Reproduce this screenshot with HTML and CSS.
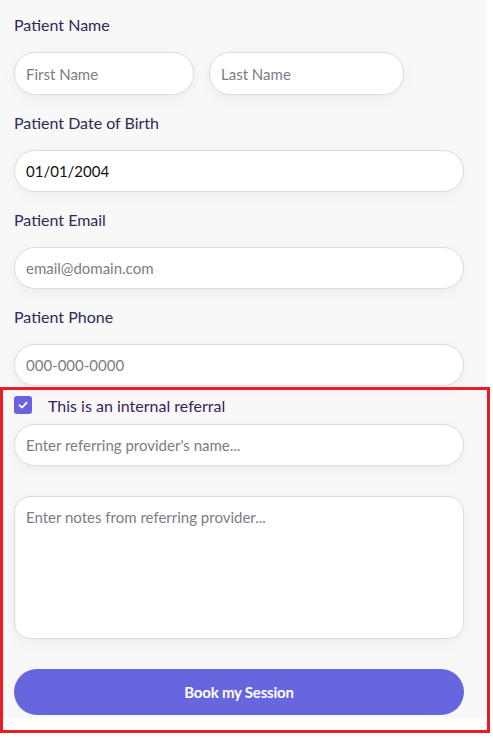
FILE: index.html
```html
<!DOCTYPE html>
<html>
<head>
<meta charset="utf-8">
<link rel="stylesheet" href="styles.css">
</head>
<body>
<div class="page">
  <form class="form">
    <div class="group">
      <label class="label">Patient Name</label>
      <div class="row">
        <input class="input half" type="text" placeholder="First Name">
        <input class="input half" type="text" placeholder="Last Name">
      </div>
    </div>
    <div class="group">
      <label class="label">Patient Date of Birth</label>
      <input class="input" type="text" value="01/01/2004">
    </div>
    <div class="group">
      <label class="label">Patient Email</label>
      <input class="input" type="text" placeholder="email@domain.com">
    </div>
    <div class="group">
      <label class="label">Patient Phone</label>
      <input class="input" type="text" placeholder="000-000-0000">
    </div>
    <div class="check-row">
      <span class="checkbox">
        <svg width="12" height="12" viewBox="0 0 12 12"><path d="M2.5 6.2 L5 8.6 L9.6 3.6" fill="none" stroke="#fff" stroke-width="1.8" stroke-linecap="round" stroke-linejoin="round"/></svg>
      </span>
      <span class="check-label">This is an internal referral</span>
    </div>
    <input class="input" type="text" placeholder="Enter referring provider's name...">
    <textarea class="textarea" placeholder="Enter notes from referring provider..."></textarea>
    <button class="button" type="button">Book my Session</button>
  </form>
  <div class="highlight"></div>
</div>
</body>
</html>
```
FILE: styles.css
```css
html, body {
  margin: 0;
  padding: 0;
  background: #ffffff;
}
.page {
  position: relative;
  width: 493px;
  height: 738px;
  font-family: Lato, "Noto Sans", sans-serif;
}
.form {
  width: 486px;
  height: 718px;
  box-sizing: border-box;
  background: #f8f8f8;
  padding: 15px 22px 0 14px;
  display: flex;
  flex-direction: column;
}
.group {
  display: flex;
  flex-direction: column;
  margin-bottom: 18px;
}
.label {
  font-size: 16px;
  line-height: 20px;
  height: 20px;
  color: #2e2a57;
  margin-bottom: 17px;
}
.row {
  display: flex;
  gap: 15px;
}
.input {
  box-sizing: border-box;
  height: 42px;
  width: 100%;
  flex: none;
  border: 1px solid #dcdcdc;
  border-radius: 21px;
  background: #ffffff;
  box-shadow: 0 4px 14px rgba(0, 0, 0, 0.05);
  padding: 0 11px;
  font-family: Lato, "Noto Sans", sans-serif;
  font-size: 15px;
  color: #111111;
  outline: none;
}
.input.half {
  width: 180px;
  height: 43px;
}
.input.half + .input.half {
  width: 195px;
}
.input::placeholder,
.textarea::placeholder {
  color: #7c7c86;
}
.check-row {
  display: flex;
  align-items: center;
  height: 18px;
  flex: none;
  margin-top: -8px;
  margin-bottom: 10px;
}
.checkbox {
  width: 18px;
  height: 18px;
  border-radius: 3px;
  background: #6862e0;
  display: flex;
  align-items: center;
  justify-content: center;
  flex: none;
}
.check-label {
  margin-left: 16px;
  font-size: 16px;
  color: #3a1d5a;
}
.textarea {
  box-sizing: border-box;
  margin-top: 30px;
  height: 143px;
  width: 100%;
  flex: none;
  border: 1px solid #dcdcdc;
  border-radius: 16px;
  background: #ffffff;
  box-shadow: 0 4px 14px rgba(0, 0, 0, 0.05);
  padding: 11px 11px;
  font-family: Lato, "Noto Sans", sans-serif;
  font-size: 15px;
  resize: none;
  outline: none;
}
.button {
  margin-top: 30px;
  height: 46px;
  width: 100%;
  flex: none;
  border: none;
  border-radius: 23px;
  background: #6866de;
  color: #ffffff;
  font-family: Lato, "Noto Sans", sans-serif;
  font-weight: 700;
  font-size: 15px;
  letter-spacing: -0.2px;
}
.highlight {
  position: absolute;
  left: 0;
  top: 387px;
  width: 490px;
  height: 346px;
  box-sizing: border-box;
  border: 3px solid #ec1c24;
  pointer-events: none;
}
```
